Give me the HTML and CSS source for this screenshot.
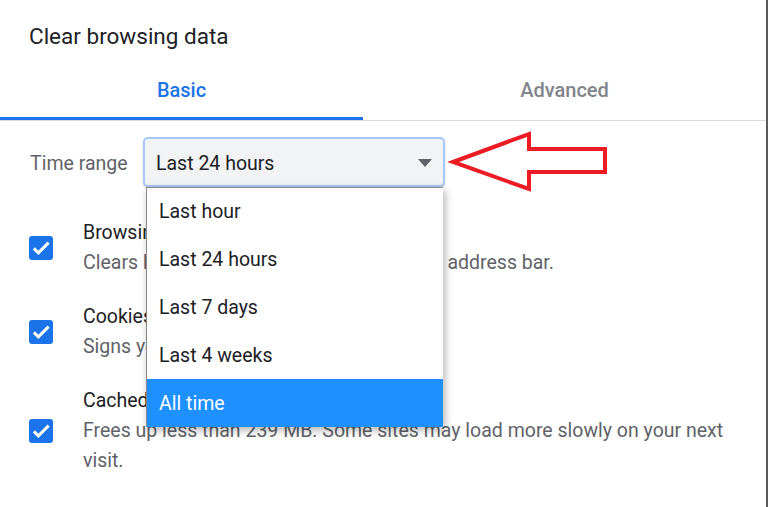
FILE: index.html
```html
<!DOCTYPE html>
<html lang="en">
<head>
  <meta charset="UTF-8">
  <meta name="viewport" content="width=device-width, initial-scale=1">
  <title>Clear browsing data</title>
  <link rel="stylesheet" href="styles.css">
</head>
<body>

  <div class="dialog">
    <h1 class="title">Clear browsing data</h1>

    <div class="tabs">
      <div class="tab active">Basic</div>
      <div class="tab">Advanced</div>
    </div>

    <div class="time-row">
      <span class="time-label">Time range</span>
      <div class="select-wrap">
        <div class="select">
          <span>Last 24 hours</span>
          <span class="caret"></span>
        </div>
        <ul class="menu">
          <li>Last hour</li>
          <li>Last 24 hours</li>
          <li>Last 7 days</li>
          <li>Last 4 weeks</li>
          <li class="selected">All time</li>
        </ul>
      </div>

      <!-- red annotation arrow -->
      <svg class="pointer" width="180" height="75" viewBox="0 0 180 75">
        <polygon points="13,38 89,10 89,25 165,25 165,48 89,48 89,65" fill="none" stroke="#ed1c24" stroke-width="4"/>
      </svg>
    </div>

    <div class="options">
      <div class="option">
        <span class="check">
          <svg width="24" height="24" viewBox="0 0 24 24"><path d="M4.8 12.4l4.6 4.4L19.6 6.6" fill="none" stroke="#fff" stroke-width="3"/></svg>
        </span>
        <div class="option-text">
          <div class="option-title">Browsing history</div>
          <div class="option-sub">Clears history and autocompletions in the address bar.</div>
        </div>
      </div>
      <div class="option">
        <span class="check">
          <svg width="24" height="24" viewBox="0 0 24 24"><path d="M4.8 12.4l4.6 4.4L19.6 6.6" fill="none" stroke="#fff" stroke-width="3"/></svg>
        </span>
        <div class="option-text">
          <div class="option-title">Cookies and other site data</div>
          <div class="option-sub">Signs you out of most sites.</div>
        </div>
      </div>
      <div class="option">
        <span class="check">
          <svg width="24" height="24" viewBox="0 0 24 24"><path d="M4.8 12.4l4.6 4.4L19.6 6.6" fill="none" stroke="#fff" stroke-width="3"/></svg>
        </span>
        <div class="option-text">
          <div class="option-title">Cached images and files</div>
          <div class="option-sub">Frees up less than 239 MB. Some sites may load more slowly on your next visit.</div>
        </div>
      </div>
    </div>
  </div>

</body>
</html>
```

FILE: styles.css
```css
body {
  margin: 0;
  font-family: Roboto, "Liberation Sans", sans-serif;
  color: #202124;
  background: #fff;
}
.dialog {
  width: 768px;
  height: 507px;
  border-right: 2px solid #5a5a5a;
  box-sizing: border-box;
  position: relative;
}
.title {
  margin: 0;
  padding: 23px 0 0 29px;
  height: 60px;
  box-sizing: border-box;
  font-size: 22.5px;
  font-weight: 400;
  line-height: 26px;
}
.tabs {
  display: grid;
  grid-template-columns: 363px 1fr;
  border-bottom: 1px solid #dadce0;
}
.tab {
  height: 60px;
  box-sizing: border-box;
  display: flex;
  align-items: center;
  justify-content: center;
  font-size: 20px;
  font-weight: 500;
  color: #80868b;
}
.tab.active {
  color: #1a73e8;
  border-bottom: 3px solid #1a73e8;
  padding-top: 3px;
}
.time-row {
  display: flex;
  align-items: center;
  padding-left: 30px;
  margin-top: 16px;
  position: relative;
}
.time-label {
  width: 113px;
  font-size: 19.5px;
  color: #5f6368;
  padding-top: 2px;
}
.select-wrap {
  position: relative;
}
.select {
  width: 302px;
  height: 50px;
  box-sizing: border-box;
  border: 2px solid #a8c7fa;
  border-radius: 5px;
  background: #f1f3f4;
  box-shadow: 0 1px 2px rgba(0, 0, 0, 0.2);
  display: flex;
  align-items: center;
  justify-content: space-between;
  padding: 2px 11px 0 11px;
  font-size: 19.5px;
}
.caret {
  width: 0;
  height: 0;
  border-left: 7.5px solid transparent;
  border-right: 7.5px solid transparent;
  border-top: 8px solid #5f6368;
}
.menu {
  position: absolute;
  top: 50px;
  left: 3px;
  width: 297px;
  margin: 0;
  padding: 0;
  list-style: none;
  background: #fff;
  border-top: 1px solid #8a8a8a;
  border-left: 1px solid #8a8a8a;
  box-sizing: border-box;
  box-shadow: 2px 3px 8px rgba(0, 0, 0, 0.3);
  z-index: 2;
}
.menu li {
  height: 48px;
  box-sizing: border-box;
  padding: 1px 0 0 12px;
  line-height: 47px;
  font-size: 19.5px;
}
.menu li:first-child {
  height: 47px;
  line-height: 46px;
}
.menu li.selected {
  background: #1e90ff;
  color: #fff;
}
.pointer {
  position: absolute;
  left: 440px;
  top: -13px;
  z-index: 3;
}
.options {
  padding: 31px 0 0 29px;
}
.option {
  display: flex;
  align-items: center;
  margin-bottom: 24px;
}
.check {
  width: 24px;
  height: 24px;
  border-radius: 3px;
  background: #1a73e8;
  flex-shrink: 0;
  margin-right: 30px;
}
.check svg {
  display: block;
}
.option-text {
  font-size: 19.5px;
  line-height: 30px;
  padding-right: 30px;
}
.option-sub {
  color: #5f6368;
}
```
